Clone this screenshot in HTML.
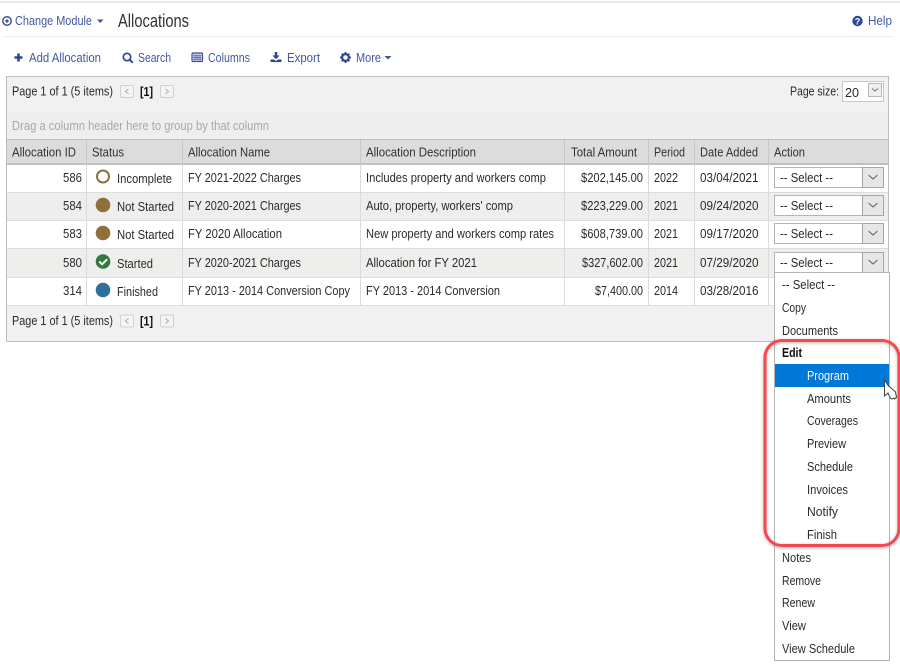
<!DOCTYPE html>
<html lang="en"><head><meta charset="utf-8"><title>Allocations</title>
<style>
html,body{margin:0;padding:0;background:#fff;width:900px;height:671px;overflow:hidden}
svg{display:block}
text{font-family:"Liberation Sans",sans-serif;font-size:12.5px;fill:#2b2b2b}
.l{fill:#4557a3}
.h{fill:#333}
.g{fill:#a8a8a8}
</style></head><body>
<svg width="900" height="671" viewBox="0 0 900 671" xmlns="http://www.w3.org/2000/svg">
<defs>
<filter id="sh" x="-10%" y="-10%" width="120%" height="120%"><feDropShadow dx="0" dy="1" stdDeviation="1.500" flood-color="#000" flood-opacity=".3"/></filter>
<filter id="soft" x="0" y="0" width="100%" height="100%"><feGaussianBlur stdDeviation=".28"/></filter>
<g id="sel">
<rect x="774.500" y=".5" width="109" height="20" fill="#fff" stroke="#b5b5b5"/>
<rect x="862.500" y=".5" width="21" height="20" fill="#e6e6e6" stroke="#a5a5a5"/>
<path d="M868.500 8l4.500 4 4.500-4" fill="none" stroke="#666" stroke-width="1.100"/>
</g>
<g id="pg">
<rect x="120.500" y=".5" width="13" height="12" rx="1.500" fill="#f4f4f4" stroke="#d0d0d0"/>
<path d="M128.500 4l-3 2.500 3 2.500" fill="none" stroke="#aaa"/>
<rect x="160.500" y=".5" width="13" height="12" rx="1.500" fill="#f4f4f4" stroke="#d0d0d0"/>
<path d="M165.500 4l3 2.500-3 2.500" fill="none" stroke="#aaa"/>
</g>
</defs>
<g filter="url(#soft)">
<rect x="0" y="0" width="900" height="671" fill="#fff"/>
<rect x="0" y="1" width="900" height="2" fill="#ebebeb"/>
<rect x="2" y="36" width="891" height="1" fill="#ececec"/>
<!-- header -->
<circle cx="7" cy="21" r="4.200" fill="none" stroke="#3f51a0" stroke-width="1.500"/>
<circle cx="7" cy="21" r="1.600" fill="#3f51a0"/>
<text class="l" x="15" y="25" textLength="77" lengthAdjust="spacingAndGlyphs">Change Module</text>
<path d="M97 19.500h6.500l-3.250 3.500z" fill="#3f51a0"/>
<text x="118" y="27" style="font-size:18.500px" textLength="71" lengthAdjust="spacingAndGlyphs" class="h">Allocations</text>
<circle cx="857.500" cy="21" r="5.200" fill="#2c4a9a"/>
<text x="857.500" y="24.500" text-anchor="middle" style="font-size:9px;font-weight:bold;fill:#fff">?</text>
<text class="l" x="868" y="25" textLength="24" lengthAdjust="spacingAndGlyphs">Help</text>
<!-- toolbar -->
<path d="M18.500 53.500v8M14.500 57.500h8" stroke="#2f4596" stroke-width="2.600" fill="none"/>
<text class="l" x="29" y="62" textLength="72" lengthAdjust="spacingAndGlyphs">Add Allocation</text>
<circle cx="127" cy="57" r="3.700" fill="none" stroke="#2f4596" stroke-width="1.700"/>
<path d="M129.800 59.800l3 3" stroke="#2f4596" stroke-width="2"/>
<text class="l" x="138" y="62" textLength="33" lengthAdjust="spacingAndGlyphs">Search</text>
<rect x="192" y="53" width="10.500" height="8.500" rx="1" fill="#c5cbe2" stroke="#3f51a0" stroke-width="1.200"/>
<path d="M193.500 55.800h7.500M193.500 57.500h7.500M193.500 59.200h7.500" stroke="#3f51a0" stroke-width=".8"/>
<text class="l" x="208" y="62" textLength="42" lengthAdjust="spacingAndGlyphs">Columns</text>
<path d="M274.700 52h2.600v3.500h2.300l-3.600 3.800-3.600-3.800h2.300zM270.500 59.500h3.500l2 1.500 2-1.500h3.500v2.500h-11z" fill="#2f4596"/>
<text class="l" x="287" y="62" textLength="33" lengthAdjust="spacingAndGlyphs">Export</text>
<circle cx="345.500" cy="57.500" r="3.400" fill="none" stroke="#2f4596" stroke-width="2.200"/>
<path d="M345.500 52v2M345.500 61v2M340 57.500h2M349 57.500h2M341.700 53.700l1.400 1.400M347.900 59.900l1.400 1.400M349.300 53.700l-1.400 1.400M343.100 59.900l-1.400 1.400" stroke="#2f4596" stroke-width="1.800"/>
<text class="l" x="356" y="62" textLength="25" lengthAdjust="spacingAndGlyphs">More</text>
<path d="M384.500 56h7l-3.500 3.500z" fill="#3f51a0"/>
<!-- grid -->
<rect x="6.500" y="76.500" width="882" height="265" fill="#f1f1f1" stroke="#bdbdbd"/>
<rect x="7" y="112" width="881" height="27" fill="#eeeeee"/>
<g transform="translate(0,85)"><use href="#pg"/></g>
<text x="12" y="95.500" textLength="101" lengthAdjust="spacingAndGlyphs">Page 1 of 1 (5 items)</text>
<text x="140" y="96" style="font-weight:bold;fill:#111" textLength="13" lengthAdjust="spacingAndGlyphs">[1]</text>
<text x="790" y="95.500" textLength="49" lengthAdjust="spacingAndGlyphs">Page size:</text>
<rect x="842.500" y="81.500" width="41" height="20" fill="#fff" stroke="#c8c8c8"/>
<rect x="868.500" y="83.500" width="13" height="13" fill="#efefef" stroke="#b8b8b8"/>
<path d="M872 88.500l3 2.500 3-2.500" fill="none" stroke="#777"/>
<text x="845" y="97" style="font-size:13px" textLength="14" lengthAdjust="spacingAndGlyphs">20</text>
<text class="g" x="12" y="130" textLength="257" lengthAdjust="spacingAndGlyphs">Drag a column header here to group by that column</text>
<!-- header row -->
<rect x="7" y="140" width="881" height="23" fill="#dcdcdc"/>
<rect x="7" y="139" width="881" height="1" fill="#c0c0c0"/>
<rect x="7" y="163" width="881" height="2" fill="#bfbfbf"/>
<!-- rows -->
<rect x="7" y="165" width="881" height="27" fill="#fff"/>
<rect x="7" y="193" width="881" height="27" fill="#eeeeec"/>
<rect x="7" y="221" width="881" height="27" fill="#fff"/>
<rect x="7" y="249" width="881" height="28" fill="#eeeeec"/>
<rect x="7" y="278" width="881" height="27" fill="#fff"/>
<path d="M7 192.500h881M7 220.500h881M7 248.500h881M7 277.500h881M7 305.500h881" stroke="#dcdcdc"/>
<path d="M86.500 140v165M182.500 140v165M360.500 140v165M564.500 140v165M648.500 140v165M694.500 140v165M768.500 140v165" stroke="#c6c6c6"/>
<path d="M86.500 165v140M182.500 165v140M360.500 165v140M564.500 165v140M648.500 165v140M694.500 165v140M768.500 165v140" stroke="#dadada"/>
<g>
<text class="h" x="12" y="156.500" textLength="64" lengthAdjust="spacingAndGlyphs">Allocation ID</text>
<text class="h" x="92" y="156.500" textLength="32" lengthAdjust="spacingAndGlyphs">Status</text>
<text class="h" x="188" y="156.500" textLength="82" lengthAdjust="spacingAndGlyphs">Allocation Name</text>
<text class="h" x="366" y="156.500" textLength="110" lengthAdjust="spacingAndGlyphs">Allocation Description</text>
<text class="h" x="571" y="156.500" textLength="66" lengthAdjust="spacingAndGlyphs">Total Amount</text>
<text class="h" x="654" y="156.500" textLength="31" lengthAdjust="spacingAndGlyphs">Period</text>
<text class="h" x="700" y="156.500" textLength="58" lengthAdjust="spacingAndGlyphs">Date Added</text>
<text class="h" x="774" y="156.500" textLength="31" lengthAdjust="spacingAndGlyphs">Action</text>
</g>
<!-- row 1 -->
<text x="63" y="182" textLength="19" lengthAdjust="spacingAndGlyphs">586</text>
<circle cx="103" cy="176.500" r="6" fill="#fff" stroke="#8f6f3a" stroke-width="2"/>
<text x="117" y="183" textLength="55" lengthAdjust="spacingAndGlyphs">Incomplete</text>
<text x="188" y="182" textLength="113" lengthAdjust="spacingAndGlyphs">FY 2021-2022 Charges</text>
<text x="366" y="182" textLength="180" lengthAdjust="spacingAndGlyphs">Includes property and workers comp</text>
<text x="581" y="182" textLength="62" lengthAdjust="spacingAndGlyphs">$202,145.00</text>
<text x="654" y="182" textLength="24" lengthAdjust="spacingAndGlyphs">2022</text>
<text x="700" y="182" textLength="58.500" lengthAdjust="spacingAndGlyphs">03/04/2021</text>
<!-- row 2 -->
<text x="63" y="210" textLength="19" lengthAdjust="spacingAndGlyphs">584</text>
<circle cx="103" cy="205" r="7.300" fill="#8f6f3a"/>
<text x="117" y="211" textLength="57" lengthAdjust="spacingAndGlyphs">Not Started</text>
<text x="188" y="210" textLength="113" lengthAdjust="spacingAndGlyphs">FY 2020-2021 Charges</text>
<text x="366" y="210" textLength="147" lengthAdjust="spacingAndGlyphs">Auto, property, workers' comp</text>
<text x="581" y="210" textLength="62" lengthAdjust="spacingAndGlyphs">$223,229.00</text>
<text x="654" y="210" textLength="24" lengthAdjust="spacingAndGlyphs">2021</text>
<text x="700" y="210" textLength="58.500" lengthAdjust="spacingAndGlyphs">09/24/2020</text>
<!-- row 3 -->
<text x="63" y="238" textLength="19" lengthAdjust="spacingAndGlyphs">583</text>
<circle cx="103" cy="233" r="7.300" fill="#8f6f3a"/>
<text x="117" y="239" textLength="57" lengthAdjust="spacingAndGlyphs">Not Started</text>
<text x="188" y="238" textLength="94" lengthAdjust="spacingAndGlyphs">FY 2020 Allocation</text>
<text x="366" y="238" textLength="188" lengthAdjust="spacingAndGlyphs">New property and workers comp rates</text>
<text x="581" y="238" textLength="62" lengthAdjust="spacingAndGlyphs">$608,739.00</text>
<text x="654" y="238" textLength="24" lengthAdjust="spacingAndGlyphs">2021</text>
<text x="700" y="238" textLength="58.500" lengthAdjust="spacingAndGlyphs">09/17/2020</text>
<!-- row 4 -->
<text x="63" y="267" textLength="19" lengthAdjust="spacingAndGlyphs">580</text>
<circle cx="103" cy="261.500" r="7.300" fill="#2f7a3f"/>
<path d="M99.300 261.500l2.800 2.800 5-5" fill="none" stroke="#fff" stroke-width="2"/>
<text x="117" y="268" textLength="36" lengthAdjust="spacingAndGlyphs">Started</text>
<text x="188" y="267" textLength="113" lengthAdjust="spacingAndGlyphs">FY 2020-2021 Charges</text>
<text x="366" y="267" textLength="111" lengthAdjust="spacingAndGlyphs">Allocation for FY 2021</text>
<text x="582" y="267" textLength="61" lengthAdjust="spacingAndGlyphs">$327,602.00</text>
<text x="654" y="267" textLength="24" lengthAdjust="spacingAndGlyphs">2021</text>
<text x="700" y="267" textLength="58.500" lengthAdjust="spacingAndGlyphs">07/29/2020</text>
<!-- row 5 -->
<text x="63" y="295" textLength="19" lengthAdjust="spacingAndGlyphs">314</text>
<circle cx="103" cy="290" r="7.300" fill="#2f7098"/>
<text x="117" y="296" textLength="41" lengthAdjust="spacingAndGlyphs">Finished</text>
<text x="188" y="295" textLength="162" lengthAdjust="spacingAndGlyphs">FY 2013 - 2014 Conversion Copy</text>
<text x="366" y="295" textLength="134" lengthAdjust="spacingAndGlyphs">FY 2013 - 2014 Conversion</text>
<text x="595" y="295" textLength="48" lengthAdjust="spacingAndGlyphs">$7,400.00</text>
<text x="654" y="295" textLength="24" lengthAdjust="spacingAndGlyphs">2014</text>
<text x="700" y="295" textLength="58.500" lengthAdjust="spacingAndGlyphs">03/28/2016</text>
<!-- footer pager -->
<g transform="translate(0,314.500)"><use href="#pg"/></g>
<text x="12" y="325" textLength="101" lengthAdjust="spacingAndGlyphs">Page 1 of 1 (5 items)</text>
<text x="140" y="325.500" style="font-weight:bold;fill:#111" textLength="13" lengthAdjust="spacingAndGlyphs">[1]</text>
<!-- selects -->
<g transform="translate(0,167)"><use href="#sel"/></g>
<text x="780" y="182" textLength="53" lengthAdjust="spacingAndGlyphs">-- Select --</text>
<g transform="translate(0,195)"><use href="#sel"/></g>
<text x="780" y="210" textLength="53" lengthAdjust="spacingAndGlyphs">-- Select --</text>
<g transform="translate(0,223)"><use href="#sel"/></g>
<text x="780" y="238" textLength="53" lengthAdjust="spacingAndGlyphs">-- Select --</text>
<g transform="translate(0,252)"><use href="#sel"/></g>
<text x="780" y="267" textLength="53" lengthAdjust="spacingAndGlyphs">-- Select --</text>
<!-- dropdown -->
<rect x="774.500" y="272.500" width="115" height="388" fill="#fff" stroke="#b4b4b4"/>
<rect x="775" y="364" width="114" height="23" fill="#0078d7"/>
<text x="782" y="289" textLength="53" lengthAdjust="spacingAndGlyphs">-- Select --</text>
<text x="782" y="312" textLength="24" lengthAdjust="spacingAndGlyphs">Copy</text>
<text x="782" y="335" textLength="56" lengthAdjust="spacingAndGlyphs">Documents</text>
<text x="782" y="357" style="font-weight:bold;fill:#111" textLength="20" lengthAdjust="spacingAndGlyphs">Edit</text>
<text x="807" y="380" style="fill:#fff" textLength="42" lengthAdjust="spacingAndGlyphs">Program</text>
<text x="807" y="403" textLength="44" lengthAdjust="spacingAndGlyphs">Amounts</text>
<text x="807" y="425" textLength="51" lengthAdjust="spacingAndGlyphs">Coverages</text>
<text x="807" y="448" textLength="39" lengthAdjust="spacingAndGlyphs">Preview</text>
<text x="807" y="471" textLength="46" lengthAdjust="spacingAndGlyphs">Schedule</text>
<text x="807" y="494" textLength="41" lengthAdjust="spacingAndGlyphs">Invoices</text>
<text x="807" y="516" textLength="31" lengthAdjust="spacingAndGlyphs">Notify</text>
<text x="807" y="539" textLength="30" lengthAdjust="spacingAndGlyphs">Finish</text>
<text x="782" y="562" textLength="29" lengthAdjust="spacingAndGlyphs">Notes</text>
<text x="782" y="585" textLength="39" lengthAdjust="spacingAndGlyphs">Remove</text>
<text x="782" y="607" textLength="33" lengthAdjust="spacingAndGlyphs">Renew</text>
<text x="782" y="630" textLength="24" lengthAdjust="spacingAndGlyphs">View</text>
<text x="782" y="653" textLength="73" lengthAdjust="spacingAndGlyphs">View Schedule</text>
<!-- cursor -->
<path d="M884.500 380v16l3.500-3 2.500 5.500 1.500.5 2-1 .5 1 2-1.500-1-5.500-5.500-5-1.500-1z" fill="#fff" stroke="#444" stroke-width="1"/>
<!-- red highlight -->
<rect x="765" y="340.500" width="134" height="205" rx="17" fill="none" stroke="#f4474f" stroke-width="3" filter="url(#sh)"/>
</g>
</svg>
</body></html>
